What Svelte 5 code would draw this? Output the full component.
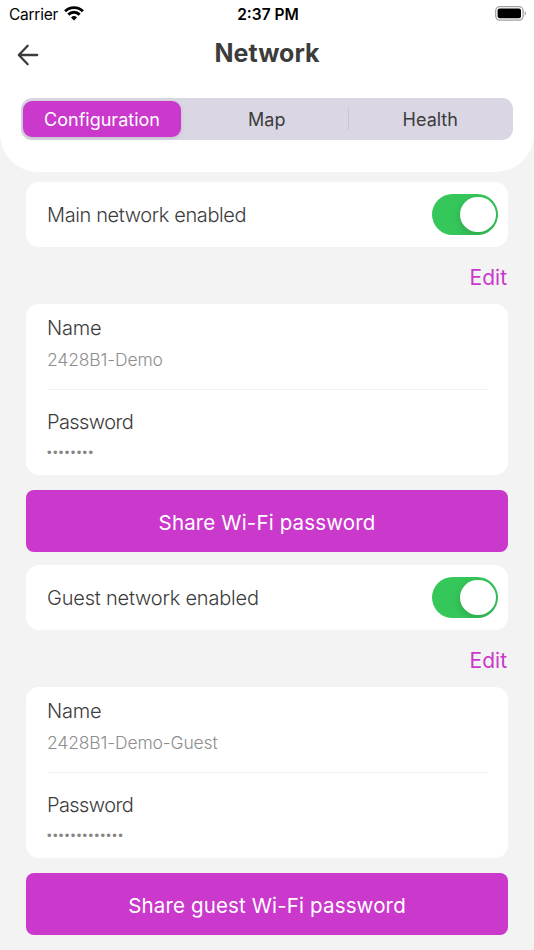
<script lang="ts">
	type Network = {
		id: string;
		title: string;
		enabled: boolean;
		name: string;
		password: string;
		shareLabel: string;
	};

	const tabs = ['Configuration', 'Map', 'Health'];

	let activeTab = $state('Configuration');
	let networks = $state<Network[]>([
		{
			id: 'main',
			title: 'Main network enabled',
			enabled: true,
			name: '2428B1-Demo',
			password: '••••••••',
			shareLabel: 'Share Wi-Fi password'
		},
		{
			id: 'guest',
			title: 'Guest network enabled',
			enabled: true,
			name: '2428B1-Demo-Guest',
			password: '•••••••••••••',
			shareLabel: 'Share guest Wi-Fi password'
		}
	]);
</script>

<div class="screen">
	<header>
		<div class="status-bar">
			<div class="carrier">
				<span>Carrier</span>
				<svg class="wifi" width="20" height="15" viewBox="0 0 20 15" aria-hidden="true">
					<path d="M1.1 5.2a12.8 12.8 0 0 1 17.8 0" />
					<path d="M4.3 8.6a8.2 8.2 0 0 1 11.4 0" />
					<path class="dot" d="M7 11.4a4.5 4.5 0 0 1 6 0L10 14.4z" />
				</svg>
			</div>
			<span class="time">2:37 PM</span>
			<svg class="battery" width="32" height="15" viewBox="0 0 32 15" aria-hidden="true">
				<rect class="shell" x="0.7" y="0.7" width="27.4" height="13.4" rx="4" />
				<rect x="2.6" y="2.6" width="23.4" height="9.6" rx="2" />
				<path class="tip" d="M29.7 5v4.8c1.7-.8 1.7-4 0-4.8z" />
			</svg>
		</div>

		<div class="title-bar">
			<button class="back" aria-label="Back">
				<svg width="22" height="22" viewBox="0 0 22 22" aria-hidden="true">
					<path d="M20.2 11H2M10.7 1.8L1.8 11l8.9 9.2" />
				</svg>
			</button>
			<h1>Network</h1>
		</div>

		<div class="tabs" role="tablist">
			{#each tabs as tab}
				<button
					class="tab"
					class:active={tab === activeTab}
					role="tab"
					aria-selected={tab === activeTab}
					onclick={() => (activeTab = tab)}
				>
					{tab}
				</button>
			{/each}
		</div>
	</header>

	<main>
		{#each networks as network (network.id)}
			<section class={network.id}>
				<div class="card enable-row">
					<span class="enable-label">{network.title}</span>
					<button
						class="toggle"
						class:on={network.enabled}
						role="switch"
						aria-checked={network.enabled}
						aria-label={network.title}
						onclick={() => (network.enabled = !network.enabled)}
					>
						<span class="knob"></span>
					</button>
				</div>

				<div class="edit-row">
					<button class="edit">Edit</button>
				</div>

				<div class="card details">
					<div class="field">
						<span class="label">Name</span>
						<span class="value">{network.name}</span>
					</div>
					<div class="field">
						<span class="label password-label">Password</span>
						<span class="value dots">{network.password}</span>
					</div>
				</div>

				<button class="share">{network.shareLabel}</button>
			</section>
		{/each}
	</main>
</div>

<style>
	:global(body) {
		background: #f3f3f3;
	}

	.screen {
		width: 534px;
		height: 950px;
		overflow: hidden;
		background: #f3f3f3;
		color: #3c3c3c;
		font-family: Inter, 'Liberation Sans', sans-serif;
	}

	button {
		margin: 0;
		padding: 0;
		border: none;
		background: none;
		color: inherit;
		font: inherit;
		cursor: pointer;
	}

	svg {
		display: block;
	}

	header {
		height: 172px;
		box-sizing: border-box;
		background: #ffffff;
		border-radius: 0 0 38px 38px;
	}

	.status-bar {
		display: grid;
		grid-template-columns: 1fr auto 1fr;
		align-items: center;
		height: 27px;
		padding: 0 7px 0 9px;
		color: #000000;
		font-size: 15.5px;
	}

	.carrier {
		display: flex;
		align-items: center;
		gap: 6px;
		letter-spacing: -0.25px;
	}

	.carrier span {
		padding-top: 1px;
	}

	.wifi path {
		fill: none;
		stroke: #000000;
		stroke-width: 2.9;
	}

	.wifi .dot {
		fill: #000000;
		stroke: none;
	}

	.time {
		padding-top: 1px;
		font-weight: 600;
		letter-spacing: 0;
	}

	.battery {
		justify-self: end;
	}

	.battery .shell {
		fill: none;
		stroke: #a0a0a0;
		stroke-width: 1.3;
	}

	.battery .tip {
		fill: #a0a0a0;
	}

	.title-bar {
		display: grid;
		grid-template-columns: 60px 1fr 60px;
		align-items: center;
		height: 55px;
	}

	.back {
		padding: 1px 0 0 17px;
	}

	.back path {
		fill: none;
		stroke: #3c3c3c;
		stroke-width: 2.3;
		stroke-linecap: round;
		stroke-linejoin: round;
	}

	h1 {
		margin: 0;
		padding-bottom: 3px;
		text-align: center;
		font-size: 25px;
		font-weight: 700;
		line-height: 52px;
	}

	.tabs {
		display: flex;
		height: 42px;
		box-sizing: border-box;
		margin: 16px 21px 0;
		padding: 3px 2px;
		border-radius: 11px;
		background: #dad6e3;
	}

	.tab {
		position: relative;
		flex: 1 1 0;
		border-radius: 9px;
		font-size: 18px;
		font-weight: 400;
	}

	.tab.active {
		flex: 0 0 158px;
		margin-right: 5px;
		background: #ca38cc;
		color: #ffffff;
		box-shadow: 0 1px 4px rgba(0, 0, 0, 0.12);
	}

	.tab:not(.active) + .tab {
		padding-left: 2px;
	}

	.tab:not(.active) + .tab::before {
		content: '';
		position: absolute;
		left: 0;
		top: 6px;
		width: 1px;
		height: 23px;
		background: #c9c5d3;
	}

	main {
		padding: 10px 26px 0;
	}

	section {
		height: 383px;
	}

	.card {
		background: #ffffff;
		border-radius: 13px;
	}

	.enable-row {
		display: flex;
		align-items: center;
		justify-content: space-between;
		height: 64.5px;
		padding: 0 10px 0 21px;
	}

	.enable-label,
	.label {
		font-size: 20px;
		font-weight: 300;
		letter-spacing: -0.2px;
	}

	.enable-label {
		padding-top: 2px;
	}

	.main .enable-label {
		letter-spacing: -0.38px;
	}

	.toggle {
		display: flex;
		align-items: center;
		width: 66px;
		height: 40.5px;
		box-sizing: border-box;
		padding: 0 2.5px;
		border-radius: 21px;
		background: #d8d8dc;
		overflow: hidden;
	}

	.toggle.on {
		justify-content: flex-end;
		background: #35c75a;
	}

	.knob {
		width: 35.5px;
		height: 35.5px;
		border-radius: 50%;
		background: #ffffff;
		box-shadow: 0 3px 9px rgba(0, 0, 0, 0.17);
	}

	.edit-row {
		display: flex;
		align-items: center;
		justify-content: flex-end;
		height: 57px;
		padding: 5px 1px 0 0;
		box-sizing: border-box;
	}

	.edit {
		color: #ca38cc;
		font-size: 21px;
		font-weight: 400;
	}

	.details {
		height: 171.5px;
		box-sizing: border-box;
		padding: 0 20px 0 21px;
	}

	.field {
		display: flex;
		flex-direction: column;
		height: 85px;
		box-sizing: border-box;
		padding-top: 11px;
	}

	.field + .field {
		border-top: 1.5px solid #f1f1f1;
		padding-top: 19px;
	}

	.label {
		line-height: 26px;
	}

	.password-label {
		letter-spacing: -0.6px;
	}

	.value {
		margin-top: 6px;
		color: #8e8e8e;
		font-size: 17.5px;
		font-weight: 300;
		letter-spacing: -0.15px;
		line-height: 26px;
	}

	.dots {
		margin-top: 5px;
		color: #858585;
		font-family: 'Liberation Sans', Arial, sans-serif;
		font-size: 13px;
		font-weight: 400;
		letter-spacing: 1.38px;
	}

	.share {
		display: block;
		width: 100%;
		height: 62px;
		margin-top: 15px;
		padding-top: 2px;
		border-radius: 8px;
		background: #ca38cc;
		color: #ffffff;
		font-size: 20.5px;
		font-weight: 400;
		letter-spacing: 0.15px;
	}
</style>
